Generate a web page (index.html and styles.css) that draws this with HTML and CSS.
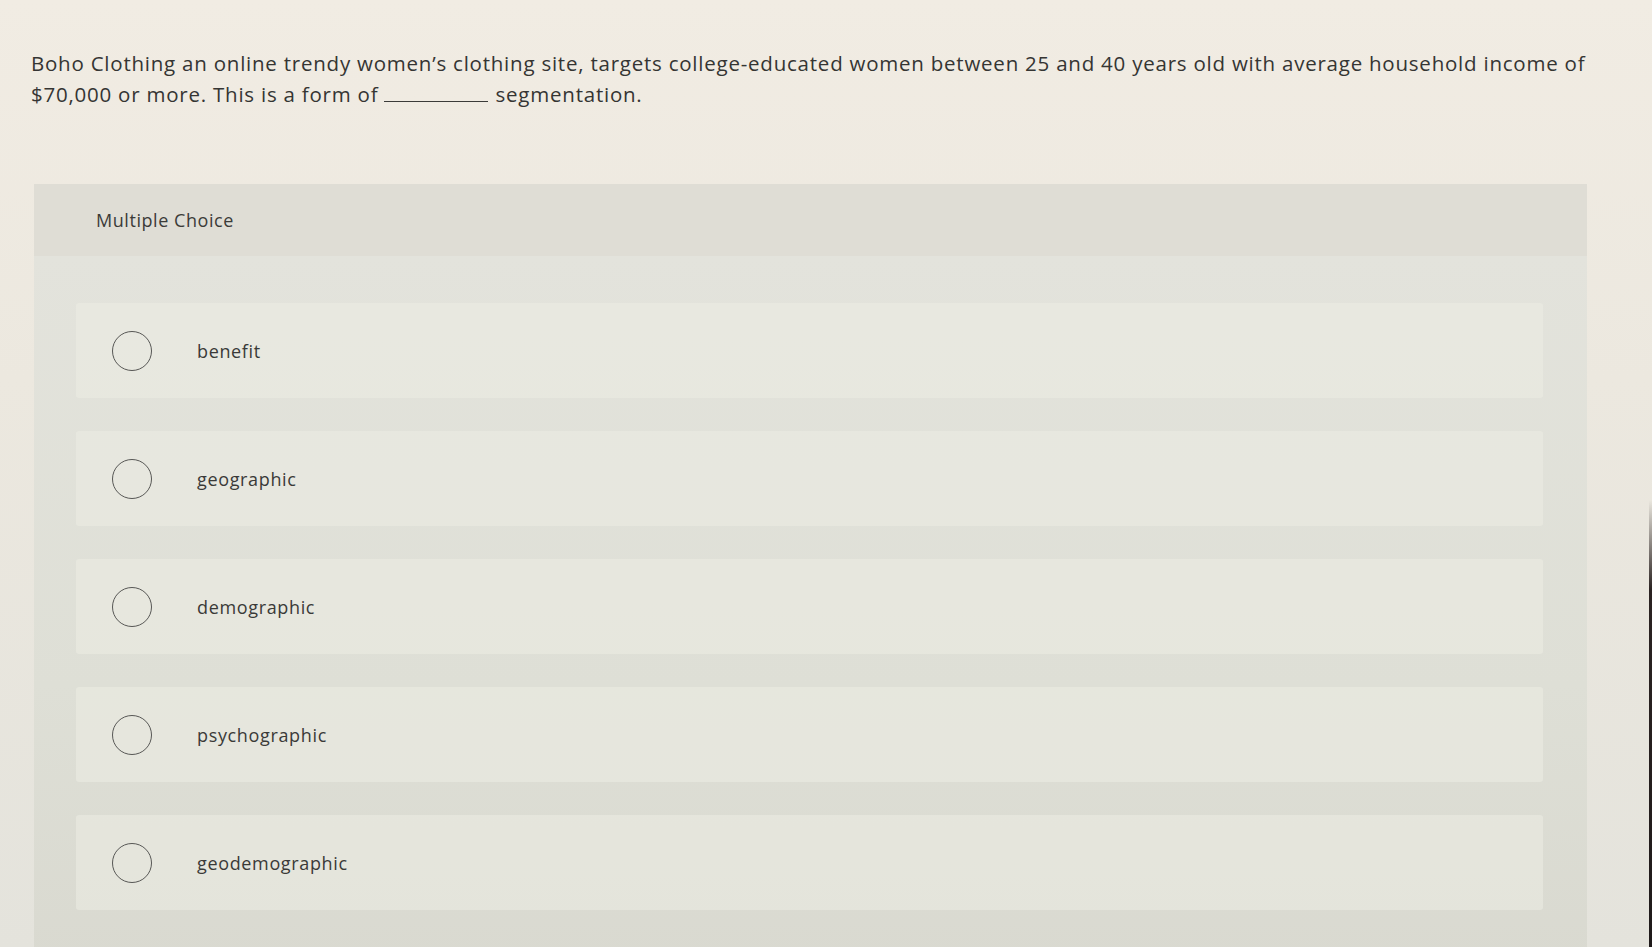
FILE: index.html
```html
<!DOCTYPE html>
<html lang="en">
<head>
<meta charset="utf-8">
<title>Multiple Choice</title>
<link rel="stylesheet" href="styles.css">
</head>
<body>
<main class="page">
  <p class="question">Boho Clothing an online trendy women’s clothing site, targets college-educated women between 25 and 40 years old with average household income of<br>$70,000 or more. This is a form of <span class="blank"></span> segmentation.</p>
  <section class="card">
    <header class="card-head">Multiple Choice</header>
    <div class="card-body">
      <label class="option"><span class="radio"></span><span class="opt-text">benefit</span></label>
      <label class="option"><span class="radio"></span><span class="opt-text">geographic</span></label>
      <label class="option"><span class="radio"></span><span class="opt-text">demographic</span></label>
      <label class="option"><span class="radio"></span><span class="opt-text">psychographic</span></label>
      <label class="option"><span class="radio"></span><span class="opt-text">geodemographic</span></label>
    </div>
  </section>
</main>
</body>
</html>
```
FILE: styles.css
```css
* { box-sizing: border-box; }
html, body {
  margin: 0;
  height: 947px;
  overflow: hidden;
}
body {
  background: linear-gradient(180deg, #f1ece3 0%, #ece8df 40%, #e4e3dc 100%);
  font-family: "Open Sans", Lato, sans-serif;
  color: #353533;
  position: relative;
}
body::after {
  content: "";
  position: absolute;
  right: 0;
  top: 500px;
  bottom: 0;
  width: 3px;
  background: linear-gradient(180deg, rgba(40,30,30,0) 0%, #2b2322 20%, #1f1a1a 100%);
}
.page {
  padding: 48px 0 0 31px;
}
.question {
  margin: 0;
  width: 1615px;
  font-size: 20.5px;
  line-height: 31px;
  letter-spacing: 0.77px;
  white-space: nowrap;
}
.blank {
  display: inline-block;
  width: 104px;
  border-bottom: 1px solid #3b3b39;
  vertical-align: baseline;
  margin-right: 1px;
}
.card {
  margin: 74px 0 0 3px;
  width: 1553px;
}
.card-head {
  height: 72px;
  display: flex;
  align-items: center;
  padding-left: 62px;
  background: #dfddd5;
  font-size: 18px;
  letter-spacing: 0.55px;
  color: #3b3b39;
}
.card-body {
  background: linear-gradient(180deg, #e3e3dc 0%, #dedfd6 60%, #d9d9d0 100%);
  padding: 47px 44px 60px 42px;
  display: flex;
  flex-direction: column;
  gap: 33px;
}
.option {
  height: 95px;
  display: flex;
  align-items: center;
  padding-left: 36px;
  background: rgba(236, 236, 228, 0.55);
  border-radius: 3px;
}
.radio {
  width: 40px;
  height: 40px;
  border: 1.5px solid #575755;
  border-radius: 50%;
  flex: none;
}
.opt-text {
  margin-left: 45px;
  font-size: 18px;
  letter-spacing: 0.65px;
  color: #3a3a38;
}
```
